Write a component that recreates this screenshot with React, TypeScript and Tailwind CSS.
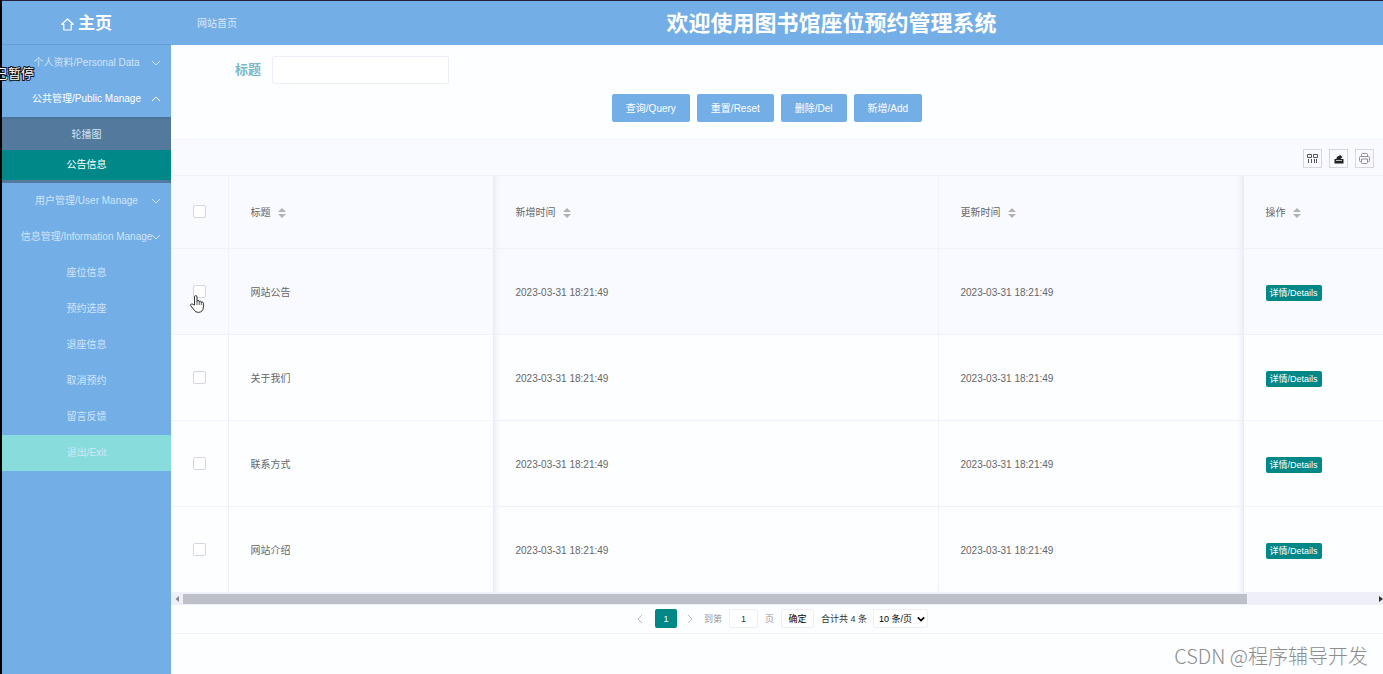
// App.tsx
import { useState } from 'react';

type MenuItem = { label: string; open?: boolean };

const GROUPS_TOP: MenuItem[] = [
  { label: '个人资料/Personal Data' },
  { label: '公共管理/Public Manage', open: true },
];
const GROUPS_BOTTOM: MenuItem[] = [
  { label: '用户管理/User Manage' },
  { label: '信息管理/Information Manage' },
];
const LINKS = ['座位信息', '预约选座', '退座信息', '取消预约', '留言反馈'];

const ROWS = [
  { title: '网站公告', created: '2023-03-31 18:21:49', updated: '2023-03-31 18:21:49' },
  { title: '关于我们', created: '2023-03-31 18:21:49', updated: '2023-03-31 18:21:49' },
  { title: '联系方式', created: '2023-03-31 18:21:49', updated: '2023-03-31 18:21:49' },
  { title: '网站介绍', created: '2023-03-31 18:21:49', updated: '2023-03-31 18:21:49' },
];

const ACTIONS = ['查询/Query', '重置/Reset', '删除/Del', '新增/Add'];

export default function App() {
  const [checked, setChecked] = useState<number[]>([]);
  const [keyword, setKeyword] = useState('');
  const [page, setPage] = useState('1');

  const toggle = (i: number) =>
    setChecked(checked.includes(i) ? checked.filter((n) => n !== i) : [...checked, i]);
  const toggleAll = () => setChecked(checked.length === ROWS.length ? [] : ROWS.map((_, i) => i));

  return (
    <div className="relative flex min-h-screen flex-col border-l-2 border-t border-l-black border-t-[#24203c] bg-[#fdfeff] font-['Liberation_Sans','Noto_Sans_CJK_SC',sans-serif] text-[10px] leading-4 text-[#666]">
      {/* 顶栏 */}
      <header className="flex h-11 items-center bg-[#74aee6] text-white">
        <a href="#" className="flex h-full w-[169px] shrink-0 items-center justify-center gap-1 border-b border-[#689dd0] pt-[3px]">
          <HomeIcon />
          <span className="text-[17px] font-bold leading-6">主页</span>
        </a>
        <a href="#" className="w-[109px] shrink-0 pl-[26px] pt-[2px] text-[#d8e9fa]">网站首页</a>
        <h1 className="flex-1 pt-[2px] text-center text-[22px] font-bold leading-8">欢迎使用图书馆座位预约管理系统</h1>
      </header>

      <div className="flex flex-1">
        {/* 侧边菜单 */}
        <nav className="w-[169px] shrink-0 bg-[#74aee6] text-[#d0e5f8]">
          {GROUPS_TOP.map((g) => <Group key={g.label} {...g} />)}
          <div className="bg-[#537a9d] py-[3px] shadow-[inset_0_2px_2px_#4b7398]">
            <a href="#" className="flex h-[30px] items-center justify-center">轮播图</a>
            <a href="#" className="flex h-[30px] items-center justify-center bg-[#008888] text-white">公告信息</a>
          </div>
          {GROUPS_BOTTOM.map((g) => <Group key={g.label} {...g} />)}
          {LINKS.map((l) => (
            <a key={l} href="#" className="flex h-9 items-center justify-center">{l}</a>
          ))}
          <a href="#" className="flex h-9 items-center justify-center bg-[#88dcdc]">退出/Exit</a>
        </nav>

        <main className="min-w-0 flex-1">
          {/* 查询表单 */}
          <form className="h-[94px] pt-[11px]" onSubmit={(e) => e.preventDefault()}>
            <div className="flex items-center pl-[64px]">
              <label htmlFor="kw" className="mr-[11px] text-[13px] font-bold text-[#7ab8c8]">标题</label>
              <input
                id="kw"
                className="h-7 w-[177px] rounded-xs border border-[#eeeef8] bg-white px-2 outline-none"
                value={keyword}
                onChange={(e) => setKeyword(e.target.value)}
              />
            </div>
            <div className="mt-[10px] flex justify-center gap-[7px] pr-[20px]">
              {ACTIONS.map((a) => (
                <button key={a} type="button" className="h-7 rounded-xs bg-[#74aee6] px-[14px] pt-[2px] text-white">{a}</button>
              ))}
            </div>
          </form>

          {/* 工具栏 */}
          <div className="flex h-[37px] items-center justify-end gap-[7px] border-y border-[#f0f1fb] bg-[#f9faff] pr-[9px] pt-[2px]">
            <Tool label="筛选列"><GridIcon /></Tool>
            <Tool label="导出"><ExportIcon /></Tool>
            <Tool label="打印"><PrintIcon /></Tool>
          </div>

          {/* 数据表格 */}
          <table className="w-full table-fixed border-collapse text-left">
            <colgroup>
              <col className="w-[57px]" />
              <col className="w-[265px]" />
              <col />
              <col className="w-[305px]" />
              <col className="w-[140px]" />
            </colgroup>
            <thead>
              <tr className="h-[72px] border-b border-[#f0f1fb] bg-[#f9faff]">
                <th className="border-r border-[#f0f1fb]">
                  <Check label="全选" checked={checked.length === ROWS.length} onChange={toggleAll} />
                </th>
                <Head className="border-r border-[#ebebf8]">标题</Head>
                <Head className="border-r border-[#f0f1fb] shadow-[inset_5px_0_5px_-3px_#ebebf8]">新增时间</Head>
                <Head className="border-r border-[#ebebf8] shadow-[inset_-5px_0_5px_-3px_#ebebf8]">更新时间</Head>
                <Head>操作</Head>
              </tr>
            </thead>
            <tbody>
              {ROWS.map((r, i) => (
                <tr key={r.title} className="h-[86px] border-b border-[#f0f1fb] first:bg-[#f9faff]">
                  <td className="border-r border-[#f0f1fb]">
                    <Check label={`选择 ${r.title}`} checked={checked.includes(i)} onChange={() => toggle(i)} />
                  </td>
                  <td className="border-r border-[#ebebf8] px-[22px] pt-1">{r.title}</td>
                  <td className="border-r border-[#f0f1fb] px-[22px] pt-1 shadow-[inset_5px_0_5px_-3px_#ebebf8]">{r.created}</td>
                  <td className="border-r border-[#ebebf8] px-[22px] pt-1 shadow-[inset_-5px_0_5px_-3px_#ebebf8]">{r.updated}</td>
                  <td className="px-[22px] pt-1">
                    <button className="flex h-4 items-center whitespace-nowrap rounded-xs bg-[#008888] px-1 text-[9px] text-white">详情/Details</button>
                  </td>
                </tr>
              ))}
            </tbody>
          </table>

          {/* 横向滚动条 */}
          <div className="flex h-3 items-center bg-[#efeffa]">
            <svg className="w-3 shrink-0" height="6" viewBox="0 0 12 6"><path d="M8 0v6L4.500 3z" fill="#888" /></svg>
            <div className="flex-1">
              <div className="h-[10px] w-[89%] bg-[#bdbfc9]" />
            </div>
            <svg className="shrink-0" width="4" height="6" viewBox="0 0 4 6"><path d="M0 0v6l4-3z" fill="#333" /></svg>
          </div>

          {/* 分页 */}
          <div className="flex h-[29px] items-center justify-center border-b border-[#f0f1fb] pl-[3px] text-[9px] text-[#333]">
            <button aria-label="上一页" className="flex w-[22px] justify-center"><Chevron className="size-[10px] rotate-90 text-[#bbb]" /></button>
            <button className="mx-1 h-[19px] w-[22px] rounded-xs bg-[#008888] text-white">1</button>
            <button aria-label="下一页" className="flex w-[18px] justify-center"><Chevron className="size-[10px] -rotate-90 text-[#bbb]" /></button>
            <label htmlFor="page" className="ml-[5px] text-[#999]">到第</label>
            <input
              id="page"
              className="mx-[7px] h-[19px] w-[29px] rounded-xs border border-[#eeeef8] bg-white text-center outline-none"
              value={page}
              onChange={(e) => setPage(e.target.value)}
            />
            <span className="text-[#999]">页</span>
            <button className="mx-[7px] h-[19px] w-[33px] rounded-xs border border-[#eeeef8] bg-white text-black">确定</button>
            <span>合计共 4 条</span>
            <span className="relative ml-[6px] flex items-center">
              <select aria-label="每页条数" className="h-[19px] w-[55px] appearance-none rounded-xs border border-[#eeeef8] bg-white pl-[5px] text-black outline-none">
                <option>10 条/页</option>
                <option>20 条/页</option>
              </select>
              <Chevron className="pointer-events-none absolute right-[3px] size-2 stroke-2 text-black" />
            </span>
          </div>
        </main>
      </div>

      {/* 浮层：暂停提示、鼠标、水印 */}
      <span className="absolute -left-[7px] top-[63px] whitespace-nowrap text-[13px] leading-5 text-white [paint-order:stroke] [-webkit-text-stroke:2px_#111]">已暂停</span>
      <Hand />
      <span className="absolute bottom-[6px] right-[15px] font-['Noto_Sans_CJK_SC',sans-serif] text-[20px] font-light leading-6 text-[#8c8c8c]">CSDN @程序辅导开发</span>
    </div>
  );
}

/* ---------- 小组件 ---------- */

function Group({ label, open }: MenuItem) {
  return (
    <button className={`relative flex h-9 w-full items-center justify-center whitespace-nowrap ${open ? 'text-white' : ''}`}>
      {label}
      <Chevron className={`absolute right-[10px] size-[10px] ${open ? 'rotate-180' : ''}`} />
    </button>
  );
}

function Head({ children, className = '' }: { children: React.ReactNode; className?: string }) {
  return (
    <th className={`px-[22px] pt-[2px] font-normal ${className}`}>
      <span className="flex items-center gap-[7px]">
        {children}
        <svg width="8" height="10" viewBox="0 0 8 10" fill="#b2b2b2"><path d="M4 0l4 4H0zM4 10l4-4H0z" /></svg>
      </span>
    </th>
  );
}

function Check({ label, checked, onChange }: { label: string; checked: boolean; onChange: () => void }) {
  return (
    <input
      type="checkbox"
      aria-label={label}
      checked={checked}
      onChange={onChange}
      className="mx-auto block size-[13px] appearance-none rounded-xs border border-[#d5d6e2] bg-white checked:bg-[#008888]"
    />
  );
}

function Tool({ label, children }: { label: string; children: React.ReactNode }) {
  return (
    <button aria-label={label} className="flex size-[19px] items-center justify-center border border-[#d5d6e2]">{children}</button>
  );
}

/* ---------- 图标 ---------- */

function Chevron({ className = '' }: { className?: string }) {
  return (
    <svg className={className} viewBox="0 0 10 10" fill="none" stroke="currentColor"><path d="M1 3l4 4 4-4" /></svg>
  );
}

function HomeIcon() {
  return (
    <svg width="13" height="13" viewBox="0 0 13 13" fill="none" stroke="currentColor" strokeWidth="1.2" strokeLinejoin="round">
      <path d="M2.800 6.300H.8L6.500 1l5.700 5.300h-2V12H2.800z" />
    </svg>
  );
}

function GridIcon() {
  return (
    <svg width="11" height="11" viewBox="0 0 11 11" fill="none" stroke="#55505f">
      <path d="M.5 1.500h4v3h-4zM6.500 1.500h4v3h-4zM1.500 6v4M4.500 6v4M7.500 6v4M9.500 6v4" />
    </svg>
  );
}

function ExportIcon() {
  return (
    <svg width="10" height="10" viewBox="0 0 10 10" fill="#222">
      <path d="M.5 5h9v4.500h-9zM2.500 4C3 2.500 4 2 5.500 2V.5L8.500 3 6.500 5H2.500z" />
      <path d="M2 6.500h6" stroke="#fff" strokeWidth=".7" />
    </svg>
  );
}

function PrintIcon() {
  return (
    <svg width="11" height="11" viewBox="0 0 11 11" fill="none" stroke="#8a919c">
      <path d="M2.500 3.500v-2q0-1 1-1h4q1 0 1 1v2M2.500 8.500H1.500q-1 0-1-1v-3q0-1 1-1h8q1 0 1 1v3q0 1-1 1h-1M2.500 6h6v3.500q0 1-1 1h-4q-1 0-1-1z" />
    </svg>
  );
}

function Hand() {
  return (
    <svg className="pointer-events-none absolute left-[188px] top-[294px]" width="14" height="18" viewBox="0 0 14 18" fill="#fff" stroke="#333" strokeLinejoin="round">
      <path d="M4.500 10V2q0-1.500 1.200-1.500T7 2v4.500q0-1.200 1.100-1.200T9.200 6.500v.6q0-1 1-1t1.100 1.100v.7q0-.9 1-.9t1.100 1.200V12q0 5-5 5.400-3 .1-4.400-2.600L.8 10.800q-.6-1.300.4-1.800 1-.4 1.900.6z" />
      <path d="M7 6.500V10M9.200 7v3M11.300 8v2" fill="none" strokeWidth=".8" />
    </svg>
  );
}
